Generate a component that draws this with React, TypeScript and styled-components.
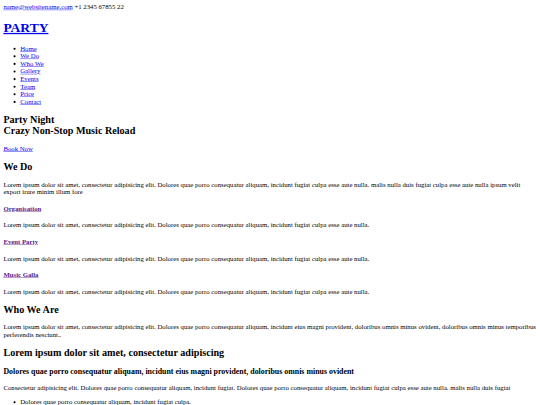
import React from 'react';
import styled, { createGlobalStyle } from 'styled-components';

// the reference is a 1280px wide page shrunk into the 540px window
const GlobalStyle = createGlobalStyle`
  html, body {
    overflow: hidden;
  }
  body {
    margin: 0;
    font-family: "Liberation Serif", "Times New Roman", serif;
    font-size: 16px;
    color: #000;
    background: #fff;
  }
`;

const Page = styled.div`
  width: 1280px;
  padding: 8px;
  box-sizing: border-box;
  transform: scale(0.421875);
  transform-origin: 0 0;
`;

const Link = styled.a<{ $visited?: boolean }>`
  color: ${(p) => (p.$visited ? '#551a8b' : '#0000ee')};
  text-decoration: underline;
  cursor: pointer;
`;

const TopBar = styled.div`
  display: block;
`;

const Logo = styled.h1`
  font-size: 2em;
  font-weight: bold;
  margin: 0.67em 0;
`;

const Menu = styled.ul`
  margin: 1em 0;
  padding-left: 40px;
  list-style: disc;
`;

const MenuItem = styled.li`
  display: list-item;
`;

const HeroTitle = styled.h2`
  font-size: 1.5em;
  font-weight: bold;
  margin: 0.83em 0;
`;

const SectionTitle = styled.h2`
  font-size: 1.5em;
  font-weight: bold;
  margin: 0.83em 0;
`;

const SubTitle = styled.h3`
  font-size: 1.17em;
  font-weight: bold;
  margin: 1em 0;
`;

const ServiceTitle = styled.h4`
  font-size: 1em;
  font-weight: bold;
  margin: 1.33em 0;
`;

const Para = styled.p`
  margin: 1em 0;
`;

const menu = ['Home', 'We Do', 'Who We', 'Gallery', 'Events', 'Team', 'Price', 'Contact'];

const serviceText =
  'Lorem ipsum dolor sit amet, consectetur adipisicing elit. Dolores quae porro consequatur aliquam, incidunt fugiat culpa esse aute nulla.';

const services = ['Organisation', 'Event Party', 'Music Galla'];

function App() {
  return (
    <Page>
      <GlobalStyle />
      <TopBar>
        <Link>name@websitename.com</Link> +1 2345 67855 22
      </TopBar>
      <Logo>
        <Link>PARTY</Link>
      </Logo>
      <Menu>
        {menu.map((item) => (
          <MenuItem key={item}>
            <Link>{item}</Link>
          </MenuItem>
        ))}
      </Menu>

      <HeroTitle>
        Party Night
        <br />
        Crazy Non-Stop Music Reload
      </HeroTitle>
      <Para>
        <Link>Book Now</Link>
      </Para>

      <SectionTitle>We Do</SectionTitle>
      <Para>
        Lorem ipsum dolor sit amet, consectetur adipisicing elit. Dolores quae porro consequatur
        aliquam, incidunt fugiat culpa esse aute nulla. malis nulla duis fugiat culpa esse aute
        nulla ipsum velit export irure minim illum fore
      </Para>
      {services.map((s) => (
        <React.Fragment key={s}>
          <ServiceTitle>
            <Link $visited>{s}</Link>
          </ServiceTitle>
          <Para>{serviceText}</Para>
        </React.Fragment>
      ))}

      <SectionTitle>Who We Are</SectionTitle>
      <Para>
        Lorem ipsum dolor sit amet, consectetur adipisicing elit. Dolores quae porro consequatur
        aliquam, incidunt eius magni provident, doloribus omnis minus ovident, doloribus omnis
        minus temporibus perferendis nesciunt..
      </Para>
      <SectionTitle>Lorem ipsum dolor sit amet, consectetur adipiscing</SectionTitle>
      <SubTitle>
        Dolores quae porro consequatur aliquam, incidunt eius magni provident, doloribus omnis
        minus ovident
      </SubTitle>
      <Para>
        Consectetur adipisicing elit. Dolores quae porro consequatur aliquam, incidunt fugiat.
        Dolores quae porro consequatur aliquam, incidunt fugiat culpa esse aute nulla. malis nulla
        duis fugiat
      </Para>
      <Menu>
        <MenuItem>Dolores quae porro consequatur aliquam, incidunt fugiat culpa.</MenuItem>
      </Menu>
    </Page>
  );
}

export default App;
